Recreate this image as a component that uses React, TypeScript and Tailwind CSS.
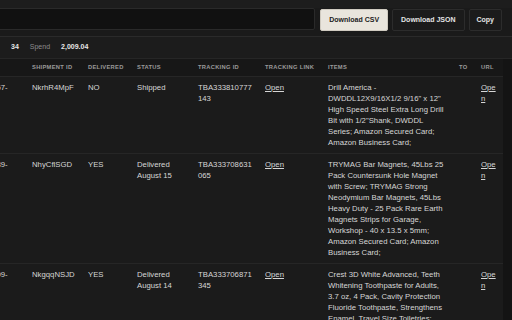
import React from "react";

type Row = {
  order: string;
  shipment: string;
  delivered: string;
  status: string[];
  tracking: string[];
  items: string;
};

const ROWS: Row[] = [
  {
    order: "113-6421957-",
    shipment: "NkrhR4MpF",
    delivered: "NO",
    status: ["Shipped"],
    tracking: ["TBA333810777", "143"],
    items:
      "Drill America - DWDDL12X9/16X1/2 9/16\" x 12\" High Speed Steel Extra Long Drill Bit with 1/2\"Shank, DWDDL Series; Amazon Secured Card; Amazon Business Card;",
  },
  {
    order: "112-8834039-",
    shipment: "NhyCflSGD",
    delivered: "YES",
    status: ["Delivered", "August 15"],
    tracking: ["TBA333708631", "065"],
    items:
      "TRYMAG Bar Magnets, 45Lbs 25 Pack Countersunk Hole Magnet with Screw; TRYMAG Strong Neodymium Bar Magnets, 45Lbs Heavy Duty - 25 Pack Rare Earth Magnets Strips for Garage, Workshop - 40 x 13.5 x 5mm; Amazon Secured Card; Amazon Business Card;",
  },
  {
    order: "114-2217709-",
    shipment: "NkgqqNSJD",
    delivered: "YES",
    status: ["Delivered", "August 14"],
    tracking: ["TBA333706871", "345"],
    items:
      "Crest 3D White Advanced, Teeth Whitening Toothpaste for Adults, 3.7 oz, 4 Pack, Cavity Protection Fluoride Toothpaste, Strengthens Enamel, Travel Size Toiletries; Amazon Secured Card; Amazon Business Card;",
  },
];

const HEADERS = ["Order", "Shipment ID", "Delivered", "Status", "Tracking ID", "Tracking Link", "Items", "To", "URL"];

const cols = "grid grid-cols-[72px_56px_49px_61px_67px_63px_131px_22px_28px] -ml-[46px]";

export default function App() {
  return (
    <div className="w-[512px] h-[320px] overflow-hidden bg-[#1a1a1a] font-['Liberation_Sans',Arial,sans-serif] text-[#d6d6d6]">
      <div className="h-[8px] bg-[#1d1d1d]" />

      {/* toolbar */}
      <div className="flex items-start gap-[4px] pr-[10px] h-[29px] border-b border-[#2a2a2a]">
        <div className="-ml-[10px] flex-1 h-[22px] bg-[#111111] border border-[#2a2a2a] rounded-[2px] mr-[1px]" />
        <button className="mt-[1px] h-[22px] px-[8px] rounded-[2px] bg-[#e9e5dd] border border-[#cfcac0] text-[#1c1c1c] text-[7px] font-bold">
          Download CSV
        </button>
        <button className="mt-[1px] h-[22px] px-[8px] rounded-[2px] bg-[#1b1b1b] border border-[#2c2c2c] text-[#e4e4e4] text-[7px] font-bold">
          Download JSON
        </button>
        <button className="mt-[1px] h-[22px] px-[7px] rounded-[2px] bg-[#1b1b1b] border border-[#2c2c2c] text-[#e4e4e4] text-[7px] font-bold">
          Copy
        </button>
      </div>

      {/* stats */}
      <div className="h-[22px] flex items-center gap-[11px] pl-[11px] bg-[#1c1c1c] border-b border-[#262626] text-[7px]">
        <span className="font-bold text-[#e6e6e6]">34</span>
        <span className="text-[#8c8c8c]">Spend</span>
        <span className="font-bold text-[#e6e6e6]">2,009.04</span>
      </div>

      <div className="flex">
        <div className="w-[503px] overflow-hidden">
          {/* header */}
          <div className={`${cols} h-[18px] items-center bg-[#171717] border-b border-[#262626]`}>
            {HEADERS.map((h) => (
              <div key={h} className="px-[6px] text-[5.75px] font-bold uppercase tracking-[0.3px] text-[#9a9a9a] whitespace-nowrap">
                {h}
              </div>
            ))}
          </div>

          {ROWS.map((r) => (
            <div key={r.shipment} className={`${cols} py-[5px] bg-[#1b1b1b] border-b border-[#262626] text-[7.75px] leading-[11px]`}>
              <div className="px-[6px] whitespace-nowrap">{r.order}</div>
              <div className="px-[6px]">{r.shipment}</div>
              <div className="px-[6px]">{r.delivered}</div>
              <div className="px-[6px]">
                {r.status.map((s) => (
                  <div key={s}>{s}</div>
                ))}
              </div>
              <div className="px-[6px]">
                {r.tracking.map((s) => (
                  <div key={s}>{s}</div>
                ))}
              </div>
              <div className="px-[6px]">
                <a className="underline">Open</a>
              </div>
              <div className="px-[6px]">{r.items}</div>
              <div className="px-[6px]" />
              <div className="px-[6px] break-all">
                <a className="underline">Open</a>
              </div>
            </div>
          ))}
        </div>
        <div className="flex-1 bg-[#141414]" />
      </div>
    </div>
  );
}
